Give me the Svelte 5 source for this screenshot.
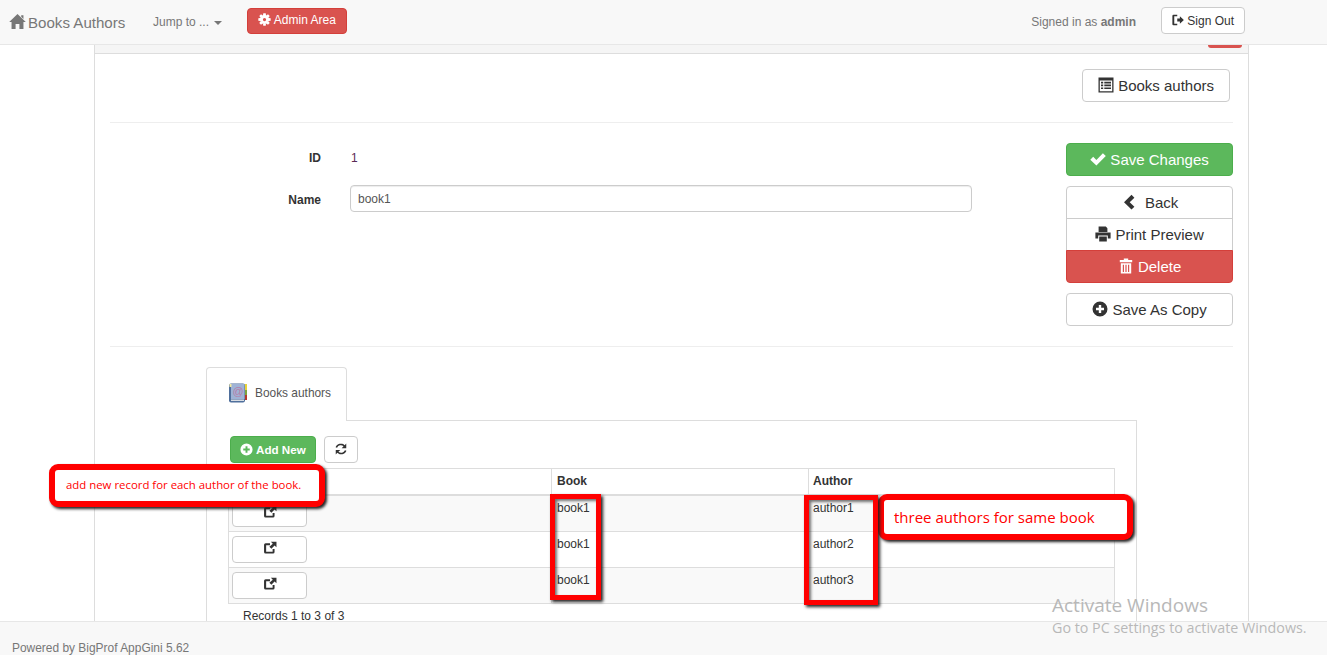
<script>
  // glyph paths on a 16x16 box, filled with currentColor
  function cogPath() {
    let d = '';
    for (let i = 0; i < 8; i++) {
      const a = (i * Math.PI) / 4;
      const pts = [[-1.5, -7.6], [1.5, -7.6], [2.2, -3], [-2.2, -3]].map(([x, y]) => {
        const px = 8 + x * Math.cos(a) - y * Math.sin(a);
        const py = 8 + x * Math.sin(a) + y * Math.cos(a);
        return `${px.toFixed(2)} ${py.toFixed(2)}`;
      });
      d += `M${pts.join('L')}Z`;
    }
    return d;
  }

  const icons = {
    home: 'M8 1L15.8 8.5H13.6V15H9.8V10.3H6.2V15H2.4V8.5H.2ZM11.5 2H13.6V5.6L11.5 3.6Z',
    logout: 'M.5 2.5A1.5 1.5 0 0 1 2 1H7V3H3V13H7V15H2A1.5 1.5 0 0 1 .5 13.5ZM7 6H10.5V3L15.8 8L10.5 13V10H7Z',
    list: 'M.5 .5H15.5V15.5H.5ZM1.8 3.4V14.2H14.2V3.4ZM3 4.8H5.2V6.4H3ZM6.3 4.8H13V6.4H6.3ZM3 7.6H5.2V9.2H3ZM6.3 7.6H13V9.2H6.3ZM3 10.4H5.2V12H3ZM6.3 10.4H13V12H6.3Z',
    ok: 'M.3 8.7L3.2 5.8L6.4 9L12.9 2.3L15.8 5.1L6.4 14.4Z',
    back: 'M10.5 .8L13.4 3.7L8.7 8.2L13.4 12.7L10.5 15.6L3 8.2Z',
    print: 'M3.6 .6H10.8L12.4 2.2V6H3.6ZM.4 6.6H15.6V12.4H12.8V9.4H3.2V12.4H.4ZM4.2 10.4H11.8V15.4H4.2Z',
    trash: 'M5.8 .4H10.2V2H14.2V4.2H1.8V2H5.8ZM2.8 5.2H13.2V15.6H2.8ZM4.8 6.8V14H6V6.8ZM7.4 6.8V14H8.6V6.8ZM10 6.8V14H11.2V6.8Z',
    plus: 'M8 .5A7.5 7.5 0 1 1 8 15.5A7.5 7.5 0 1 1 8 .5ZM6.8 4V6.8H4V9.2H6.8V12H9.2V9.2H12V6.8H9.2V4Z',
    refresh: 'M14 1.8V7H8.8L10.9 4.9A4.6 4.6 0 0 0 3.5 6.6L1.8 6.1A6.4 6.4 0 0 1 12.2 3.6ZM2 14.2V9H7.2L5.1 11.1A4.6 4.6 0 0 0 12.5 9.4L14.2 9.9A6.4 6.4 0 0 1 3.8 12.4Z',
    open: 'M3 2.6H8V4.8H3.6V12.2H11V9H13.2V12.6A1.8 1.8 0 0 1 11.4 14.4H3A1.8 1.8 0 0 1 1.2 12.6V4.4A1.8 1.8 0 0 1 3 2.6ZM9 .8H15.4V7.2L13.2 5L9.6 8.9L7.3 6.6L11.2 3Z',
    cog: cogPath() + 'M8 2.5A5.5 5.5 0 1 1 8 13.5A5.5 5.5 0 1 1 8 2.5ZM8 6A2 2 0 1 0 8 10A2 2 0 1 0 8 6Z'
  };

  const rows = [
    { book: 'book1', author: 'author1' },
    { book: 'book1', author: 'author2' },
    { book: 'book1', author: 'author3' }
  ];
</script>

{#snippet icon(name)}
  <svg class="icon" viewBox="0 0 16 16" aria-hidden="true"><path d={icons[name]} fill="currentColor" fill-rule={name === 'cog' ? 'nonzero' : 'evenodd'} /></svg>
{/snippet}

<nav class="navbar">
  <a class="brand" href="#top">{@render icon('home')}Books Authors</a>
  <span class="jump">Jump to ... <i class="caret"></i></span>
  <button class="btn danger admin">{@render icon('cog')} Admin Area</button>
  <span class="signed">Signed in as <strong>admin</strong></span>
  <button class="btn signout">{@render icon('logout')} Sign Out</button>
</nav>

<main>
  <section class="panel">
    <div class="panel-top"><span class="clipped"></span></div>
    <div class="panel-body">
      <div class="top-action">
        <button class="btn big">{@render icon('list')} Books authors</button>
      </div>
      <hr class="first" />

      <div class="detail">
        <form class="fields">
          <div class="field id">
            <span class="label">ID</span>
            <span class="value">1</span>
          </div>
          <div class="field name">
            <span class="label">Name</span>
            <input type="text" value="book1" />
          </div>
        </form>
        <div class="actions">
          <button class="btn big success wide">{@render icon('ok')} Save Changes</button>
          <div class="group">
            <button class="btn big wide">{@render icon('back')}&nbsp; Back</button>
            <button class="btn big wide">{@render icon('print')} Print Preview</button>
            <button class="btn big wide danger">{@render icon('trash')} Delete</button>
          </div>
          <button class="btn big wide">{@render icon('plus')} Save As Copy</button>
        </div>
      </div>
      <hr class="second" />

      <div class="tabs">
        <div class="tab">
          <svg class="book" viewBox="0 0 20 20" aria-hidden="true">
            <rect x="16" y="1" width="3" height="6" fill="#e8d23a" />
            <rect x="16" y="7" width="3" height="5" fill="#7fa33c" />
            <rect x="16" y="12" width="3" height="5" fill="#b5372e" />
            <rect x="1" y="0.5" width="16" height="19" rx="2" fill="#4f6f9c" />
            <rect x="3" y="1" width="13.5" height="15" fill="#9fb3d6" />
            <rect x="3" y="16.5" width="13" height="1.5" fill="#d9dde3" />
            <rect x="1.5" y="1" width="2" height="3" fill="#f3e9a0" />
            <text x="10" y="12" text-anchor="middle" class="at">@</text>
          </svg>
          <span>Books authors</span>
        </div>
        <div class="tab-pane">
          <div class="tools">
            <button class="btn success add">{@render icon('plus')} Add New</button>
            <button class="btn reload" aria-label="Refresh">{@render icon('refresh')}</button>
          </div>
          <table>
            <thead>
              <tr><th class="c1"></th><th class="c2">Book</th><th>Author</th></tr>
            </thead>
            <tbody>
              {#each rows as row, i}
                <tr class:odd={i % 2 === 0}>
                  <td><button class="btn open" aria-label="Open">{@render icon('open')}</button></td>
                  <td>{row.book}</td>
                  <td>{row.author}</td>
                </tr>
              {/each}
            </tbody>
          </table>
          <p class="records">Records 1 to 3 of 3</p>
        </div>
      </div>
    </div>
  </section>

  <div class="note add-note">add new record for each author of the book.</div>
  <div class="note authors-note">three authors for same book</div>
  <div class="mark book-mark"></div>
  <div class="mark author-mark"></div>
</main>

<footer>Powered by BigProf AppGini 5.62</footer>

<div class="activate">
  <div class="a1">Activate Windows</div>
  <div class="a2">Go to PC settings to activate Windows.</div>
</div>

<style>
  :global(body) {
    margin: 0;
    background: #fff;
    color: #333;
    font-family: "Liberation Sans", Arial, sans-serif;
    font-size: 12px;
    overflow: hidden;
  }

  .icon {
    width: 1em;
    height: 1em;
    vertical-align: -0.12em;
  }

  .btn {
    box-sizing: border-box;
    font-family: inherit;
    font-size: 12px;
    color: #333;
    background: #fff;
    border: 1px solid #ccc;
    border-radius: 4px;
    padding: 0;
    cursor: pointer;
  }

  .btn.danger {
    background: #d9534f;
    border-color: #d43f3a;
    color: #fff;
  }

  .btn.success {
    background: #5cb85c;
    border-color: #4cae4c;
    color: #fff;
  }

  .btn.big {
    font-size: 15px;
    height: 33px;
  }

  .btn.big .icon {
    width: 16px;
    height: 16px;
  }

  .btn.wide {
    width: 100%;
    display: block;
  }

  .navbar {
    box-sizing: border-box;
    height: 45px;
    display: flex;
    align-items: center;
    background: #f8f8f8;
    border-bottom: 1px solid #e7e7e7;
    color: #777;
  }

  .brand {
    margin-left: 9px;
    color: #777;
    font-size: 15.1px;
    text-decoration: none;
    width: 144px;
  }

  .brand .icon {
    font-size: 17px;
    margin-right: 2px;
    vertical-align: -0.14em;
  }

  .jump {
    width: 94px;
  }

  .caret {
    display: inline-block;
    margin-left: 2px;
    vertical-align: middle;
    border-top: 4px solid #777;
    border-left: 4px solid transparent;
    border-right: 4px solid transparent;
  }

  .admin {
    width: 100px;
    height: 26px;
    margin-top: -3px;
  }

  .admin .icon {
    font-size: 13px;
  }

  .signed {
    margin-left: auto;
  }

  .signout {
    width: 84px;
    height: 27px;
    margin: -3px 82px 0 25px;
  }

  main {
    position: relative;
    height: 576px;
    overflow: hidden;
  }

  .panel {
    box-sizing: border-box;
    width: 1155px;
    margin-left: 94px;
    border-left: 1px solid #ddd;
    border-right: 1px solid #ddd;
  }

  .panel-top {
    box-sizing: border-box;
    height: 9px;
    background: #f5f5f5;
    border-bottom: 1px solid #ddd;
    display: flex;
    justify-content: flex-end;
  }

  .clipped {
    width: 34px;
    height: 3px;
    margin-right: 6px;
    background: #d9534f;
    border-radius: 0 0 4px 4px;
  }

  .panel-body {
    padding: 15px 15px 0;
  }

  .top-action {
    display: flex;
    justify-content: flex-end;
    padding-right: 3px;
  }

  .top-action .btn {
    width: 148px;
  }

  hr {
    border: 0;
    border-top: 1px solid #eee;
    margin: 0;
  }

  hr.first {
    margin-top: 20px;
  }

  hr.second {
    margin-top: 20px;
  }

  .detail {
    display: flex;
    padding-top: 20px;
  }

  .fields {
    width: 956px;
  }

  .field {
    display: flex;
    align-items: center;
  }

  .field.id {
    height: 30px;
  }

  .field.name {
    margin-top: 12px;
  }

  .label {
    width: 211px;
    text-align: right;
    font-weight: bold;
    margin-right: 29px;
  }

  .field.name .label {
    padding-top: 2px;
  }

  .value {
    color: #5a2a55;
    margin-left: 1px;
  }

  input {
    box-sizing: border-box;
    width: 622px;
    height: 27px;
    padding: 0 7px;
    font-family: inherit;
    font-size: 12px;
    color: #555;
    border: 1px solid #ccc;
    border-radius: 4px;
    box-shadow: inset 0 1px 1px rgba(0, 0, 0, 0.075);
  }

  .actions {
    width: 167px;
  }

  .group {
    margin: 10px 0;
  }

  .group .btn {
    border-radius: 0;
    margin-top: -1px;
  }

  .group .btn:first-child {
    margin-top: 0;
    border-radius: 4px 4px 0 0;
  }

  .group .btn:last-child {
    border-radius: 0 0 4px 4px;
  }

  .tabs {
    margin: 20px 96px 0 96px;
  }

  .tab {
    box-sizing: border-box;
    width: 141px;
    height: 54px;
    display: flex;
    align-items: center;
    gap: 7px;
    padding-left: 21px;
    padding-bottom: 3px;
    font-size: 11.9px;
    color: #555;
    background: #fff;
    border: 1px solid #ddd;
    border-bottom: 0;
    border-radius: 4px 4px 0 0;
    position: relative;
    margin-bottom: -1px;
  }

  .book {
    width: 20px;
    height: 20px;
  }

  .at {
    font-size: 11px;
    fill: #b87ea8;
  }

  .tab-pane {
    box-sizing: border-box;
    width: 931px;
    height: 220px;
    border: 1px solid #ddd;
    padding: 15px 21px 0;
  }

  .tools {
    display: flex;
    gap: 8px;
    margin-left: 2px;
    height: 27px;
  }

  .add {
    width: 86px;
    font-weight: bold;
    font-size: 11.6px;
  }

  .add .icon {
    font-size: 13px;
  }

  .reload {
    width: 34px;
    font-size: 14px;
  }

  table {
    box-sizing: border-box;
    width: 887px;
    margin-top: 5px;
    border-collapse: collapse;
    table-layout: fixed;
    border: 1px solid #ddd;
  }

  th,
  td {
    box-sizing: border-box;
    text-align: left;
    vertical-align: top;
    border: 1px solid #ddd;
    padding: 4px 5px;
    line-height: 16px;
  }

  th:last-child,
  td:last-child {
    padding-left: 4px;
  }

  th {
    border-bottom-width: 2px;
    height: 26px;
  }

  td {
    height: 36px;
  }

  th.c1 {
    width: 323px;
  }

  th.c2 {
    width: 257px;
  }

  tr.odd td {
    background: #f9f9f9;
  }

  .open {
    display: block;
    width: 75px;
    height: 27px;
    padding-bottom: 2px;
    font-size: 14px;
    margin: 0 0 0 -2px;
  }

  .records {
    margin: 7px 0 0 15px;
    line-height: 10px;
  }

  footer {
    box-sizing: border-box;
    height: 34px;
    padding: 19px 0 0 12px;
    background: #f8f8f8;
    border-top: 1px solid #e7e7e7;
    color: #777;
    font-size: 11.95px;
    line-height: 15px;
  }

  .note {
    position: absolute;
    box-sizing: border-box;
    display: flex;
    align-items: center;
    background: #fff;
    color: #f00;
    border: 6px solid #f00;
    border-radius: 9px;
    box-shadow: 2px 2px 3px #222;
    font-family: "Open Sans", sans-serif;
  }

  .add-note {
    left: 49px;
    top: 419px;
    width: 276px;
    height: 43px;
    padding: 0 0 3px 11px;
    font-size: 11.4px;
  }

  .authors-note {
    left: 878px;
    top: 449px;
    width: 255px;
    height: 46px;
    padding-left: 10px;
    font-size: 15px;
  }

  .mark {
    position: absolute;
    box-sizing: border-box;
    border: 5px solid #f00;
    box-shadow: 2px 2px 3px #222, inset 2px 2px 3px rgba(0, 0, 0, 0.55);
  }

  .book-mark {
    left: 550px;
    top: 449px;
    width: 51px;
    height: 106px;
  }

  .author-mark {
    left: 804px;
    top: 450px;
    width: 74px;
    height: 110px;
  }

  .activate {
    position: absolute;
    left: 1052px;
    top: 592px;
    color: #b8b8b8;
    font-family: "Open Sans", sans-serif;
    pointer-events: none;
  }

  .a1 {
    font-size: 19px;
    line-height: 26px;
  }

  .a2 {
    font-size: 14.3px;
    line-height: 20px;
  }
</style>
